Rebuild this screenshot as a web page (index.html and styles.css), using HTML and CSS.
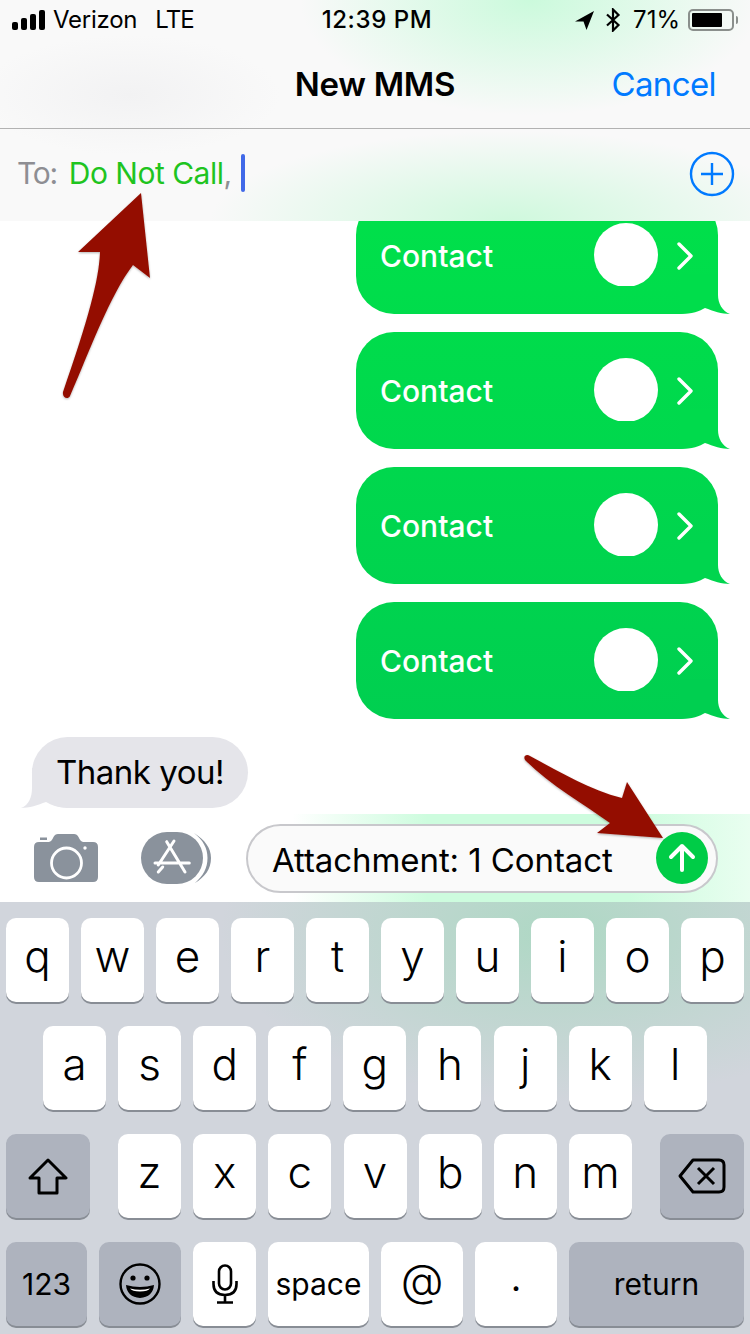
FILE: index.html
```html
<!DOCTYPE html>
<html lang="en">
<head>
<meta charset="utf-8">
<title>New MMS</title>
<link rel="stylesheet" href="styles.css">
</head>
<body>
<main class="phone">
  <header class="top">
    <div class="status">
      <div class="status-left">
        <span class="signal"><i class="b1"></i><i class="b2"></i><i class="b3"></i><i class="b4"></i></span>
        <span class="carrier">Verizon</span>
        <span class="net">LTE</span>
      </div>
      <div class="time">12:39 PM</div>
      <div class="status-right">
        <svg class="loc" width="20" height="20" viewBox="0 0 20 20"><path d="M20 1 1 11.500 9.500 11.500 12.500 20Z" fill="#000"/></svg>
        <svg class="bt" width="16" height="24" viewBox="0 0 16 24"><path d="M2 6.500 13.500 17 8 22.500V1.500L13.500 7 2 17.500" fill="none" stroke="#000" stroke-width="2.200"/></svg>
        <span class="pct">71%</span>
        <span class="battery"><span class="fill"></span></span>
        <span class="cap"></span>
      </div>
    </div>
    <nav class="nav">
      <span></span>
      <h1 class="title">New MMS</h1>
      <a class="cancel">Cancel</a>
    </nav>
    <div class="to">
      <span class="to-label">To:</span>
      <span class="to-name">Do Not Call</span><span class="to-comma">,</span>
      <span class="cursor"></span>
      <svg class="plus" width="46" height="46" viewBox="0 0 46 46"><circle cx="23" cy="23" r="21" fill="none" stroke="#007aff" stroke-width="2.400"/><path d="M12 23H34M23 12V34" stroke="#007aff" stroke-width="2.400"/></svg>
    </div>
  </header>

  <section class="messages">
    <div class="bubble">
      <span class="contact">Contact</span><span class="avatar"></span>
      <svg class="chev" width="16" height="28" viewBox="0 0 16 28"><path d="M2 2 14 14 2 26" fill="none" stroke="#fff" stroke-width="3.400" stroke-linecap="round" stroke-linejoin="round"/></svg>
      <svg class="tail" width="50" height="40" viewBox="0 0 50 40"><path d="M38 0V21C38 29 42 37 50 40 42 40 33 37 25 34 20 37 12 40 0 40L0 0Z" fill="#00dd4b"/></svg>
    </div>
    <div class="bubble">
      <span class="contact">Contact</span><span class="avatar"></span>
      <svg class="chev" width="16" height="28" viewBox="0 0 16 28"><path d="M2 2 14 14 2 26" fill="none" stroke="#fff" stroke-width="3.400" stroke-linecap="round" stroke-linejoin="round"/></svg>
      <svg class="tail" width="50" height="40" viewBox="0 0 50 40"><path d="M38 0V21C38 29 42 37 50 40 42 40 33 37 25 34 20 37 12 40 0 40L0 0Z" fill="#00da4c"/></svg>
    </div>
    <div class="bubble">
      <span class="contact">Contact</span><span class="avatar"></span>
      <svg class="chev" width="16" height="28" viewBox="0 0 16 28"><path d="M2 2 14 14 2 26" fill="none" stroke="#fff" stroke-width="3.400" stroke-linecap="round" stroke-linejoin="round"/></svg>
      <svg class="tail" width="50" height="40" viewBox="0 0 50 40"><path d="M38 0V21C38 29 42 37 50 40 42 40 33 37 25 34 20 37 12 40 0 40L0 0Z" fill="#00d54e"/></svg>
    </div>
    <div class="bubble">
      <span class="contact">Contact</span><span class="avatar"></span>
      <svg class="chev" width="16" height="28" viewBox="0 0 16 28"><path d="M2 2 14 14 2 26" fill="none" stroke="#fff" stroke-width="3.400" stroke-linecap="round" stroke-linejoin="round"/></svg>
      <svg class="tail" width="50" height="40" viewBox="0 0 50 40"><path d="M38 0V21C38 29 42 37 50 40 42 40 33 37 25 34 20 37 12 40 0 40L0 0Z" fill="#00cf50"/></svg>
    </div>
    <div class="incoming">
      <span class="incoming-text">Thank you!</span>
      <svg class="tail-in" width="50" height="40" viewBox="0 0 50 40"><path d="M11 0V20C11 29 8 37 0 40 8 40 17 37 25 34 30 37 38 40 50 40L50 0Z" fill="#e5e5ea"/></svg>
    </div>
  </section>

  <section class="compose">
    <svg class="camera" width="64" height="48" viewBox="0 0 64 48">
      <path d="M5 8H15Q17 8 18.500 5L19.500 3Q21 0 24 0H40Q43 0 44.500 3L45.500 5Q47 8 49 8H59Q64 8 64 13V43Q64 48 59 48H5Q0 48 0 43V13Q0 8 5 8Z" fill="#8a929c"/>
      <rect x="6" y="3.500" width="7" height="2.500" fill="#8a929c"/>
      <circle cx="32.500" cy="29" r="15" fill="none" stroke="#fff" stroke-width="2.800"/>
      <circle cx="51" cy="14" r="1.700" fill="#fff"/>
    </svg>
    <svg class="apps" width="70" height="52" viewBox="0 0 70 52">
      <rect x="0" y="0" width="62" height="52" rx="26" fill="#8a929c"/>
      <path d="M53 1C64 8 70 16 70 26 70 37 64 45 54 51 62 44 66.500 36 66.500 26 66.500 16 62 8 53 1Z" fill="#8a929c"/>
      <path d="M33 9 17.300 33M25.700 9.700 44 40M14 31H48.300M21.700 35 17.300 40" fill="none" stroke="#fff" stroke-width="3" stroke-linecap="round"/>
    </svg>
    <div class="field">
      <span class="field-text">Attachment: 1 Contact</span>
      <span class="send">
        <svg width="28" height="30" viewBox="0 0 28 30"><path d="M14 27V3M3 14 14 3 25 14" fill="none" stroke="#fff" stroke-width="4" stroke-linecap="round" stroke-linejoin="round"/></svg>
      </span>
    </div>
  </section>

  <section class="keyboard">
    <div class="row">
      <span class="key">q</span><span class="key">w</span><span class="key">e</span><span class="key">r</span><span class="key">t</span><span class="key">y</span><span class="key">u</span><span class="key">i</span><span class="key">o</span><span class="key">p</span>
    </div>
    <div class="row row-mid">
      <span class="key">a</span><span class="key">s</span><span class="key">d</span><span class="key">f</span><span class="key">g</span><span class="key">h</span><span class="key">j</span><span class="key">k</span><span class="key">l</span>
    </div>
    <div class="row row-shift">
      <span class="key key-dark key-side">
        <svg width="40" height="37" viewBox="0 0 40 37"><path d="M20 2 38 20H29V35H11V20H2Z" fill="none" stroke="#000" stroke-width="3" stroke-linejoin="round"/></svg>
      </span>
      <div class="letters">
        <span class="key">z</span><span class="key">x</span><span class="key">c</span><span class="key">v</span><span class="key">b</span><span class="key">n</span><span class="key">m</span>
      </div>
      <span class="key key-dark key-side">
        <svg width="48" height="36" viewBox="0 0 48 36"><path d="M15 2H41Q46 2 46 7V29Q46 34 41 34H15L2 18Z" fill="none" stroke="#000" stroke-width="3" stroke-linejoin="round"/><path d="M20 10 36 26M36 10 20 26" stroke="#000" stroke-width="3"/></svg>
      </span>
    </div>
    <div class="row row-bottom">
      <span class="key key-dark key-123 key-small">123</span>
      <span class="key key-dark key-wide">
        <svg width="42" height="42" viewBox="0 0 42 42"><circle cx="21" cy="21" r="19.500" fill="none" stroke="#000" stroke-width="2.400"/><circle cx="14" cy="15" r="2.600"/><circle cx="28" cy="15" r="2.600"/><path d="M7 22Q21 26 35 22 34 34 21 35 8 34 7 22Z" fill="#000"/><path d="M11 25.500Q21 28 31 25.500 29 28.500 21 28.500 13 28.500 11 25.500Z" fill="#fff"/></svg>
      </span>
      <span class="key">
        <svg width="26" height="40" viewBox="0 0 26 40"><rect x="7" y="1.500" width="12" height="24" rx="6" fill="none" stroke="#000" stroke-width="2.600"/><path d="M1.500 17V20Q1.500 31 13 31 24.500 31 24.500 20V17M13 31V38M5 38.500H21" fill="none" stroke="#000" stroke-width="2.600"/></svg>
      </span>
      <span class="key key-space key-small">space</span>
      <span class="key key-wide key-at">@</span>
      <span class="key key-wide key-dot">.</span>
      <span class="key key-dark key-return key-small">return</span>
    </div>
  </section>

  <svg class="callouts" width="750" height="1334" viewBox="0 0 750 1334">
    <defs>
      <filter id="soft" x="-20%" y="-20%" width="140%" height="140%"><feDropShadow dx="0" dy="1" stdDeviation="1" flood-color="#000" flood-opacity=".3"/></filter>
    </defs>
    <path filter="url(#soft)" fill="#941100" d="M141 193 78 252H100C99 280 88 320 63 392 62 398 68 400 70 396 90 350 110 295 133 265L150 278Z"/>
    <path filter="url(#soft)" fill="#941100" d="M627 782 663 838 597 833 610 823C585 805 550 785 526 761 522 757 526 753 530 756 560 772 590 790 622 798Z"/>
  </svg>
</main>
</body>
</html>
```

FILE: styles.css
```css
* { box-sizing: border-box; }
html, body { margin: 0; padding: 0; }
body { font-family: Inter, "Liberation Sans", sans-serif; color: #000; background: #fff; }

.phone {
  position: relative;
  width: 750px;
  height: 1334px;
  overflow: hidden;
  display: flex;
  flex-direction: column;
}

/* Header */
.top {
  flex: none;
  height: 221px;
  background:
    radial-gradient(ellipse 230px 115px at 530px 0, #cbfadc, rgba(203,250,220,0)),
    radial-gradient(ellipse 300px 90px at 510px 221px, #cff9dd, rgba(207,249,221,0)),
    radial-gradient(ellipse 150px 60px at 130px 95px, #f2f2f3, rgba(242,242,243,0)),
    #f9f9f9;
}
.status {
  height: 40px;
  padding: 0 12px;
  display: flex;
  align-items: center;
  font-size: 24px;
  line-height: 42px;
}
.status-left, .status-right { flex: 1; display: flex; align-items: center; }
.status-right { justify-content: flex-end; }
.signal { display: flex; align-items: flex-end; gap: 3px; height: 20px; }
.signal i { display: block; width: 6px; background: #000; border-radius: 2px; }
.b1 { height: 8px; }
.b2 { height: 12px; }
.b3 { height: 16px; }
.b4 { height: 20px; }
.carrier { margin-left: 8px; letter-spacing: -0.25px; }
.net { margin-left: 18px; letter-spacing: -0.9px; }
.time { font-weight: 500; letter-spacing: 0.6px; margin-left: 4px; }
.bt { margin-left: 11px; }
.pct { margin-left: 12px; }
.battery {
  margin-left: 8px;
  width: 46px;
  height: 22px;
  border: 2px solid #8a8f8c;
  border-radius: 5px;
  padding: 2px;
  display: flex;
}
.fill { width: 30px; background: #000; border-radius: 1px; }
.cap { margin-left: 2px; width: 2px; height: 8px; background: #8a8f8c; border-radius: 0 2px 2px 0; }

.nav {
  height: 89px;
  border-bottom: 1px solid #b2b2b2;
  display: grid;
  grid-template-columns: 1fr auto 1fr;
  align-items: center;
}
.title { margin: 0; font-size: 33px; font-weight: 600; letter-spacing: -0.3px; }
.cancel { justify-self: end; margin-right: 34px; font-size: 33px; letter-spacing: -0.6px; color: #007aff; }

.to {
  height: 92px;
  display: flex;
  align-items: center;
  padding: 0 15px 4px 17px;
  font-size: 30px;
}
.to-label { color: #8e8e93; letter-spacing: -1.3px; }
.to-name { margin-left: 12px; color: #1fc41f; letter-spacing: -0.5px; }
.to-comma { color: #8e8e93; }
.cursor { margin-left: 9px; width: 4px; height: 38px; background: #4169e8; border-radius: 2px; }
.plus { margin-left: auto; margin-top: 2px; }

/* Messages */
.messages {
  flex: 1;
  min-height: 0;
  overflow: hidden;
  display: flex;
  flex-direction: column;
  justify-content: flex-end;
  align-items: flex-end;
  gap: 18px;
  padding: 0 32px 4px;
}
.bubble {
  position: relative;
  flex: none;
  width: 362px;
  height: 117px;
  border-radius: 38px;
  background: linear-gradient(#00e04a 200px, #00cf50 720px) fixed;
  display: flex;
  align-items: center;
  padding: 0 25px;
  color: #fff;
}
.contact { flex: 1; font-size: 30px; font-weight: 500; margin-left: -1px; padding-top: 1px; }
.avatar { width: 64px; height: 64px; margin-top: -1px; border-radius: 50%; background: #fff; clip-path: inset(0 0 1px 0); }
.chev { margin-left: 19px; }
.tail { position: absolute; right: -12px; bottom: 0; }
.incoming {
  position: relative;
  flex: none;
  align-self: flex-start;
  width: 216px;
  height: 71px;
  padding: 0 0 0 24px;
  border-radius: 36px;
  background: #e5e5ea;
  display: flex;
  align-items: center;
  font-size: 33px;
}
.incoming-text { position: relative; z-index: 1; letter-spacing: -0.5px; margin-top: -2px; white-space: nowrap; }
.tail-in { position: absolute; left: -11px; bottom: 0; }

/* Compose */
.compose {
  flex: none;
  height: 90px;
  display: flex;
  align-items: flex-start;
  padding: 10px 32px 0 34px;
  border-top: 2px solid #fff;
  background:
    linear-gradient(90deg, #fff 39%, #cdfcde 57%, #cdfcde 84%, #e9fef0 100%);
}
.camera { margin-top: 10px; }
.apps { margin-top: 8px; margin-left: 43px; }
.field {
  margin-left: auto;
  width: 472px;
  height: 69px;
  border: 2px solid #c8c8cc;
  border-radius: 35px;
  background: #fafafa;
  display: flex;
  align-items: center;
  justify-content: space-between;
  padding: 0 8px 0 24px;
  font-size: 33px;
}
.field-text { margin-top: 2px; letter-spacing: -0.08px; }
.send {
  width: 52px;
  height: 52px;
  margin-top: -1px;
  border-radius: 50%;
  background: #00cc47;
  display: flex;
  align-items: center;
  justify-content: center;
}

/* Keyboard */
.keyboard {
  flex: none;
  height: 432px;
  padding-top: 16px;
  display: flex;
  flex-direction: column;
  gap: 24px;
  background:
    radial-gradient(ellipse 340px 170px at 560px 30px, #aed8c4, rgba(174,216,196,0)),
    #d1d5dc;
}
.row { display: flex; gap: 12px; height: 84px; padding: 0 6px; }
.row-mid { padding: 0 43px; gap: 12.100px; }
.row-shift { justify-content: space-between; }
.letters { display: flex; gap: 12.170px; }
.key {
  flex: none;
  width: 63px;
  height: 84px;
  border-radius: 10px;
  background: #fff;
  box-shadow: 0 2px 0 #888d95;
  display: flex;
  align-items: center;
  justify-content: center;
  font-size: 44px;
  font-weight: 300;
  padding-bottom: 8px;
}
.key svg { margin-top: 8px; }
.key-dark { background: #aeb3be; }
.key-side { width: 84px; }
.key-small { font-size: 30px; font-weight: 400; padding-bottom: 0; }
.key-123 { width: 81px; }
.key-wide { width: 82px; }
.key-space { width: 101px; }
.key-return { width: 175px; }
.key-at { font-size: 44px; }
.key-dot { font-size: 30px; font-weight: 600; }

/* Red callout arrows laid over the whole screen */
.callouts { position: absolute; left: 0; top: 0; pointer-events: none; }
```
